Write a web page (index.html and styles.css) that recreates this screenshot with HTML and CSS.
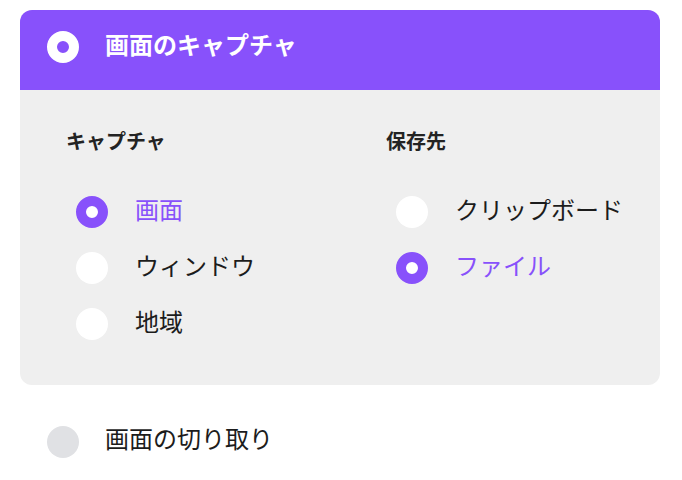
FILE: index.html
```html
<!DOCTYPE html>
<html lang="ja">
<head>
<meta charset="UTF-8">
<meta name="viewport" content="width=device-width, initial-scale=1.0">
<title>画面のキャプチャ</title>
<link rel="stylesheet" href="styles.css">
</head>
<body>
<div class="page">
    <div class="card">
        <div class="card-header">
            <span class="radio radio-header"></span>
            <span class="label header-title">画面のキャプチャ</span>
        </div>
        <div class="card-body">
            <div class="column column-left">
                <h2>キャプチャ</h2>
                <div class="option selected"><span class="radio"></span><span class="label">画面</span></div>
                <div class="option"><span class="radio"></span><span class="label">ウィンドウ</span></div>
                <div class="option"><span class="radio"></span><span class="label">地域</span></div>
            </div>
            <div class="column">
                <h2>保存先</h2>
                <div class="option"><span class="radio"></span><span class="label">クリップボード</span></div>
                <div class="option selected"><span class="radio"></span><span class="label">ファイル</span></div>
            </div>
        </div>
    </div>
    <div class="mode-row">
        <span class="radio radio-off"></span>
        <span class="label">画面の切り取り</span>
    </div>
</div>
</body>
</html>
```

FILE: styles.css
```css
body {
    font-family: "Noto Sans CJK JP", "Noto Sans", sans-serif;
    margin: 0;
    padding: 0;
    background-color: #fff;
    color: #1c1c1c;
}
.page {
    padding: 10px 0 0 20px;
}
.card {
    width: 640px;
    border-radius: 12px;
    overflow: hidden;
    background-color: #efefef;
}
.card-header {
    display: flex;
    align-items: center;
    gap: 26px;
    height: 80px;
    box-sizing: border-box;
    padding: 0 0 6px 27px;
    background-color: #8851fb;
    color: #fff;
}
.label {
    line-height: 32px;
    margin-bottom: 6px;
}
.header-title {
    font-size: 24px;
    font-weight: bold;
}
.radio {
    width: 32px;
    height: 32px;
    border-radius: 50%;
    background-color: #fff;
    box-sizing: border-box;
    flex-shrink: 0;
}
.radio-header {
    border: 10px solid #fff;
    background-color: #8851fb;
}
.radio-off {
    background-color: #e0e1e4;
}
.card-body {
    display: flex;
    padding: 36px 0 33px 46px;
}
.column-left {
    width: 320px;
}
h2 {
    margin: 0 0 28px 0;
    font-size: 20px;
    line-height: 30px;
    font-weight: bold;
    color: #232323;
}
.option {
    display: flex;
    align-items: center;
    gap: 27px;
    height: 56px;
    padding-left: 10px;
    font-size: 24px;
}
.option.selected {
    color: #8851fb;
}
.option.selected .radio {
    border: 10px solid #8851fb;
}
.mode-row {
    display: flex;
    align-items: center;
    gap: 26px;
    height: 56px;
    margin-top: 29px;
    padding-left: 27px;
    font-size: 24px;
}
.mode-row .label {
    margin-bottom: 8px;
}
```
